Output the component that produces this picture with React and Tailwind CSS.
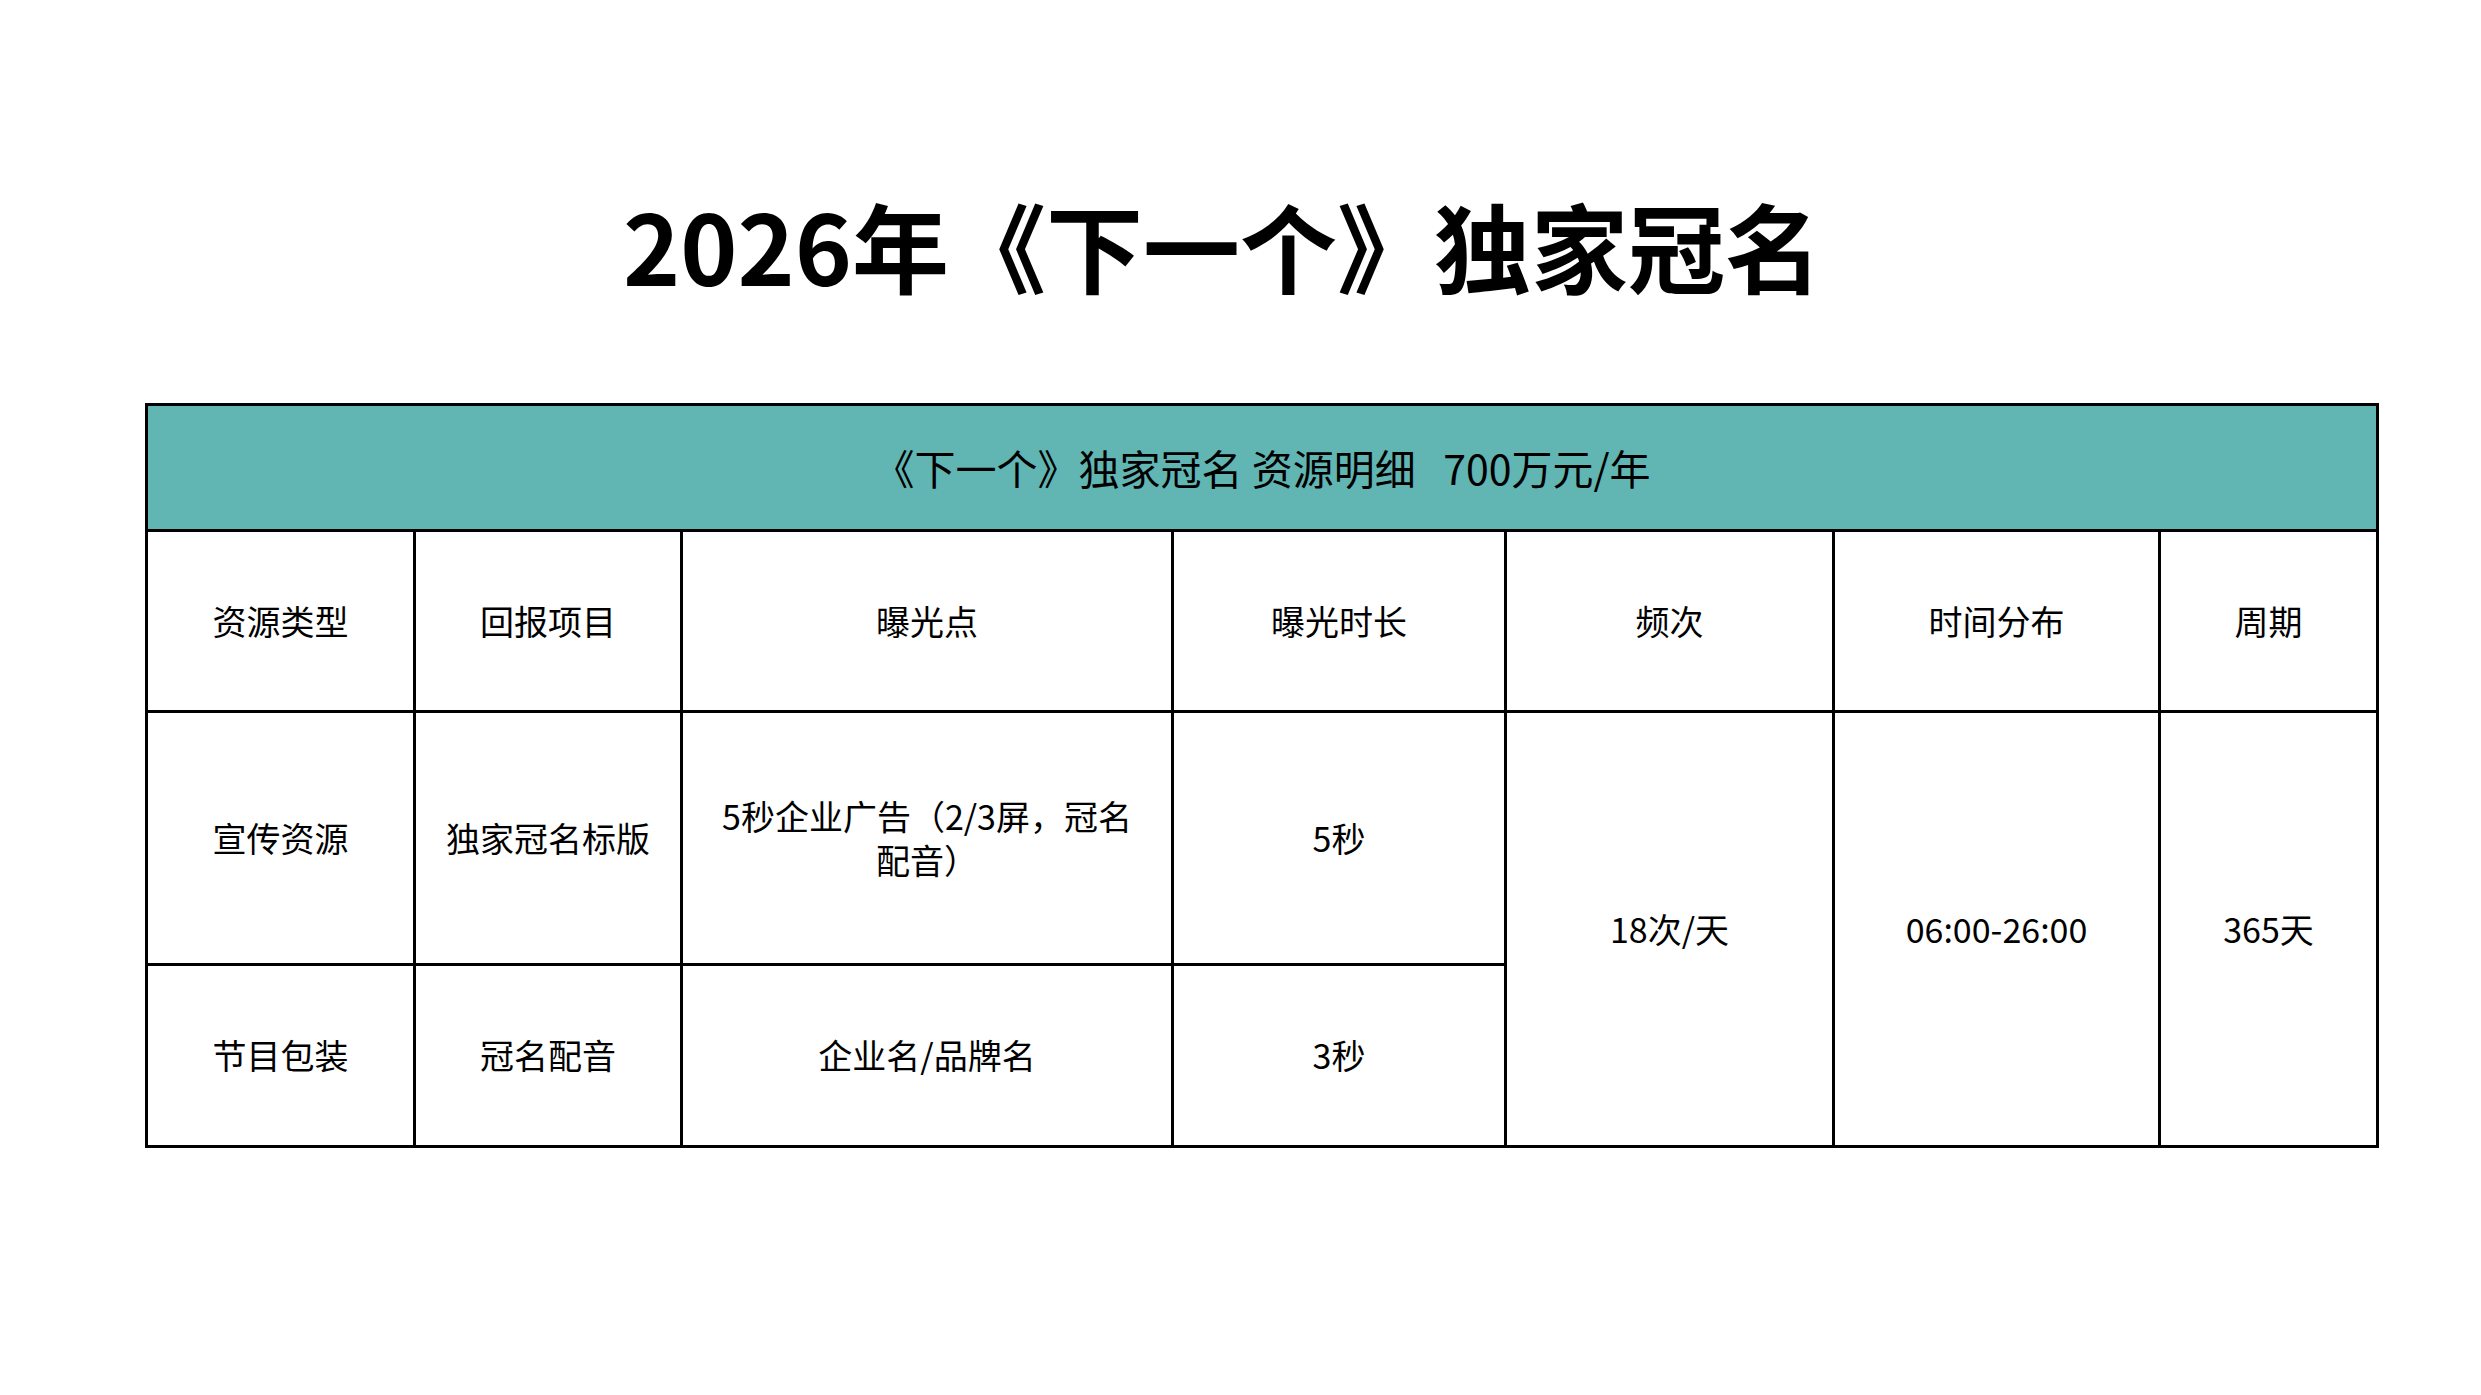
import React from "react";

const cell = "border-[3px] border-black text-center align-middle font-normal";

const App = () => {
  return (
    <div className="w-[2481px] h-[1395px] bg-white text-black font-['Noto_Sans_CJK_SC','Microsoft_YaHei',sans-serif]">
      {/* Title */}
      <div className="h-[403px] flex items-center justify-center pt-[84px] pr-[36px]">
        <h1 className="text-[97px] leading-none font-bold">
          2026年《下一个》独家冠名
        </h1>
      </div>

      {/* Resource table */}
      <table className="ml-[145px] w-[2231px] table-fixed border-collapse text-[34px] leading-[1.3]">
        <colgroup>
          <col className="w-[268px]" />
          <col className="w-[267px]" />
          <col className="w-[491px]" />
          <col className="w-[333px]" />
          <col className="w-[328px]" />
          <col className="w-[326px]" />
          <col className="w-[218px]" />
        </colgroup>
        <tbody>
          <tr className="h-[126px]">
            <td colSpan={7} className={`${cell} bg-[#61b5b3] text-[41px] whitespace-pre`}>
              {"《下一个》独家冠名 资源明细   700万元/年"}
            </td>
          </tr>
          <tr className="h-[181px]">
            <td className={cell}>资源类型</td>
            <td className={cell}>回报项目</td>
            <td className={cell}>曝光点</td>
            <td className={cell}>曝光时长</td>
            <td className={cell}>频次</td>
            <td className={cell}>时间分布</td>
            <td className={cell}>周期</td>
          </tr>
          <tr className="h-[253px]">
            <td className={cell}>宣传资源</td>
            <td className={cell}>独家冠名标版</td>
            <td className={`${cell} px-[24px]`}>5秒企业广告（2/3屏，冠名配音）</td>
            <td className={cell}>5秒</td>
            <td rowSpan={2} className={cell}>18次/天</td>
            <td rowSpan={2} className={cell}>06:00-26:00</td>
            <td rowSpan={2} className={cell}>365天</td>
          </tr>
          <tr className="h-[182px]">
            <td className={cell}>节目包装</td>
            <td className={cell}>冠名配音</td>
            <td className={cell}>企业名/品牌名</td>
            <td className={cell}>3秒</td>
          </tr>
        </tbody>
      </table>
    </div>
  );
};

export default App;
